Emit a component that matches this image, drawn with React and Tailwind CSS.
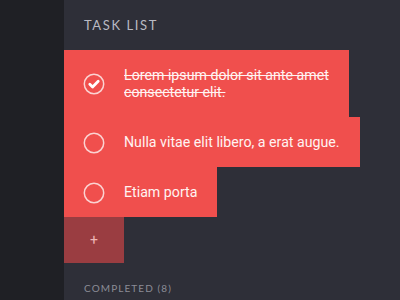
import React from 'react'

const tasks = [
    { id: 1, lines: ['Lorem ipsum dolor sit ante amet', 'consectetur elit.'], done: true },
    { id: 2, lines: ['Nulla vitae elit libero, a erat augue.'], done: false },
    { id: 3, lines: ['Etiam porta'], done: false }
]

function CheckCircle({ done }) {
    return (
        <svg width="22" height="22" viewBox="0 0 22 22" className="shrink-0 -my-[3px]">
            <circle cx="11" cy="11" r="9.7" fill="none" stroke="#fbd3d2" strokeWidth="1.5" />
            {done && (
                <path d="M6.8 11.2 L9.6 13.9 L15.2 8.2" fill="none" stroke="#ffffff" strokeWidth="2.8" strokeLinecap="round" strokeLinejoin="round" />
            )}
        </svg>
    )
}

function TaskRow({ task }) {
    return (
        <div className="w-fit shrink-0 bg-[#f04f4d] flex items-center pl-[19px] pr-[20px] pt-[17px] pb-[16px]">
            <CheckCircle done={task.done} />
            <div className={`ml-[19px] text-[14.2px] leading-[17px] text-[#fff3f2] whitespace-nowrap ${task.done ? 'line-through' : ''}`}>
                {task.lines.map((line, i) => (
                    <div key={i}>{line}</div>
                ))}
            </div>
        </div>
    )
}

export default function App() {
    return (
        <div className="w-[400px] h-[300px] flex overflow-hidden" style={{ fontFamily: 'Roboto, sans-serif' }}>
            <div className="w-16 h-full bg-[#1f2025]" />
            <div className="flex-1 h-full bg-[#2e2f38] flex flex-col">
                <div className="h-[50px] shrink-0 px-5 pt-[17px]">
                    <h1 className="font-['Lato',sans-serif] text-[13px] leading-[16px] tracking-[1.6px] text-[#b9bac3]">TASK LIST</h1>
                </div>
                <div className="flex flex-col items-start shrink-0">
                    {tasks.map((task) => (
                        <TaskRow key={task.id} task={task} />
                    ))}
                    <button type="button" className="w-[60px] h-[46px] bg-[#9a3d41] flex items-center justify-center text-[#efb5b5] text-[14px] leading-none">
                        +
                    </button>
                </div>
                <div className="px-5 pt-[18px] shrink-0">
                    <p className="font-['Lato',sans-serif] text-[10px] leading-[14px] tracking-[1.1px] text-[#8b8c96]">COMPLETED (8)</p>
                </div>
            </div>
        </div>
    )
}
